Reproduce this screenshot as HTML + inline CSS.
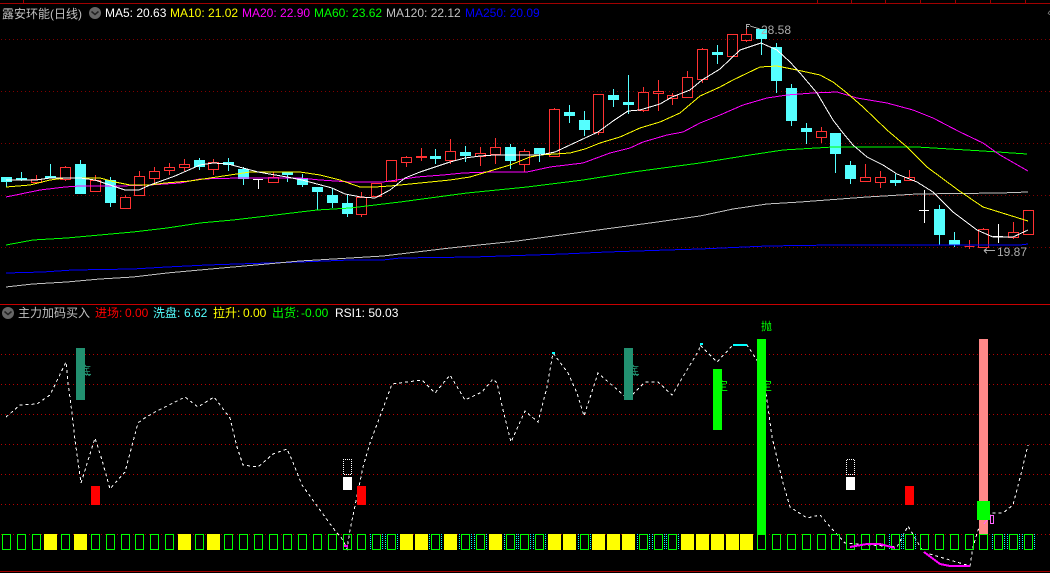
<!DOCTYPE html>
<html><head><meta charset="utf-8"><style>
html,body{margin:0;padding:0;background:#000;width:1050px;height:573px;overflow:hidden}
svg{display:block}
text{font-family:"Liberation Sans","Noto Sans CJK SC",sans-serif;font-size:12px}
.c{font-family:"Liberation Sans","WenQuanYi Zen Hei","Noto Sans CJK SC",sans-serif}
polyline,path,rect,line{shape-rendering:crispEdges}
</style></head><body>
<svg width="1050" height="573" viewBox="0 0 1050 573" xmlns="http://www.w3.org/2000/svg">
<defs>
<pattern id="g1" patternUnits="userSpaceOnUse" x="1" y="0" width="4" height="1"><rect width="1" height="1" fill="#800000"/></pattern>
<pattern id="g2" patternUnits="userSpaceOnUse" x="1" y="0" width="4" height="1"><rect width="1" height="1" fill="#b80000"/></pattern>
<pattern id="cy" patternUnits="userSpaceOnUse" x="0" y="0" width="2" height="2"><rect width="2" height="1" fill="#00ffff"/></pattern>
<pattern id="wd" patternUnits="userSpaceOnUse" x="0" y="0" width="2" height="2"><rect width="1" height="1" fill="#fff"/><rect x="1" y="1" width="1" height="1" fill="#fff"/></pattern>
</defs>
<rect width="1050" height="573" fill="#000"/>
<!-- frame -->
<path d="M0 3.5H1050M23.5 0V3M817.5 0V3M851.5 0V3M885.5 0V3M920.5 0V3M955.5 0V3M990.5 0V3M1025.5 0V3" stroke="#a00000" fill="none"/>
<path d="M0 304.5H1050" stroke="#c80000"/>
<path d="M0 571.5H1050" stroke="#a00000"/>
<!-- grid -->
<path fill="url(#g1)" d="M0 39h1050v1H0zM0 91h1050v1H0zM0 143h1050v1H0zM0 195h1050v1H0zM0 247h1050v1H0z"/>
<path fill="url(#g2)" d="M0 354h1050v1H0zM0 384h1050v1H0zM0 414h1050v1H0zM0 444h1050v1H0zM0 474h1050v1H0zM0 504h1050v1H0zM0 534h1050v1H0z"/>
<!-- red candles -->
<path fill="none" stroke="#ff3232" d="
M36.5 175V179M31.5 179.5h10v3h-10zM36.5 183V184
M65.5 166V167M60.5 167.5h10v12h-10zM65.5 180V181
M95.5 175V180M90.5 180.5h10v11h-10z
M125.5 195V197M120.5 197.5h10v11h-10z
M139.5 171V176M134.5 176.5h10v19h-10z
M154.5 167V171M149.5 171.5h10v7h-10zM154.5 179V183
M169.5 163V167M164.5 167.5h10v3h-10zM169.5 171V175
M184.5 159V164M179.5 164.5h10v3h-10zM184.5 168V171
M213.5 159V162M208.5 162.5h10v7h-10zM213.5 170V175
M273.5 172V177M268.5 177.5h10v5h-10z
M361.5 192V197M356.5 197.5h10v17h-10zM361.5 215V217
M371.5 183.5h10v13h-10z
M386.5 160.5h10v21h-10z
M406.5 156V157M401.5 157.5h10v5h-10zM406.5 163V167
M421.5 148V156M416.5 156.5h10v1h-10zM421.5 158V161
M450.5 139V151M445.5 151.5h10v9h-10zM450.5 161V164
M480.5 147V153M475.5 153.5h10v3h-10zM480.5 157V166
M495.5 138V147M490.5 147.5h10v7h-10zM495.5 155V164
M524.5 149V151M519.5 151.5h10v13h-10zM524.5 165V172
M554.5 108V109M549.5 109.5h10v47h-10z
M593.5 94.5h10v38h-10zM598.5 133V135
M643.5 87V92M638.5 92.5h10v18h-10zM643.5 111V112
M658.5 80V91M653.5 91.5h10v2h-10zM658.5 94V111
M672.5 93V95M667.5 95.5h10v3h-10zM672.5 99V105
M687.5 71V77M682.5 77.5h10v20h-10z
M702.5 48V49M697.5 49.5h10v30h-10zM702.5 80V83
M727.5 34.5h10v22h-10z
M746.5 27V34M741.5 34.5h10v6h-10zM746.5 41V42
M821.5 127V131M816.5 131.5h10v6h-10zM821.5 138V143
M865.5 164V177M860.5 177.5h10v4h-10z
M880.5 171V177M875.5 177.5h10v5h-10zM880.5 183V188
M909.5 170V177M904.5 177.5h10v3h-10z
M964.5 246.5h10M969.5 240V249
M983.5 228V229M978.5 229.5h10v18h-10z
M1013.5 222V232M1008.5 232.5h10v5h-10zM1013.5 238V239
M1023.5 210.5h10v24h-10z"/>
<!-- cyan wicks -->
<path fill="none" stroke="#55ffff" d="M6.5 177V187M21.5 172V181M50.5 164V178M80.5 160V194M110.5 177V207M199.5 158V170M228.5 158V171M243.5 167V185M287.5 172V182M302.5 174V187M317.5 187V210M332.5 188V208M347.5 195V217M435.5 149V164M465.5 146V162M510.5 144V169M539.5 148V162M569.5 105V123M584.5 111V136M613.5 89V107M628.5 75V114M717.5 45V64M761.5 29V55M776.5 43V93M791.5 84V126M806.5 123V144M835.5 133V173M850.5 161V184M895.5 174V186M939.5 205V245M954.5 232V247"/>
<!-- cyan bodies -->
<path fill="#55ffff" d="M1 177h11v5H1zM16 178h11v2H16zM45 176h11v2H45zM75 164h11v30H75zM105 180h11v23h-11zM194 160h11v7h-11zM223 162h11v3h-11zM238 169h11v10h-11zM282 172h11v3h-11zM297 178h11v7h-11zM312 187h11v5h-11zM327 195h11v8h-11zM342 203h11v11h-11zM430 156h11v3h-11zM460 152h11v4h-11zM505 147h11v14h-11zM534 148h11v6h-11zM564 112h11v4h-11zM579 120h11v10h-11zM608 95h11v5h-11zM623 102h11v3h-11zM712 52h11v3h-11zM756 29h11v10h-11zM771 47h11v34h-11zM786 88h11v33h-11zM801 128h11v4h-11zM830 133h11v21h-11zM845 165h11v14h-11zM890 180h11v3h-11zM934 209h11v26h-11zM949 240h11v5h-11z"/>
<!-- white dojis -->
<path fill="none" stroke="#fff" d="M253 179.5h10M258.5 179V189M919 210.5h10M924.5 190V223M993 236.5h10M998.5 224V243"/>
<!-- MA lines -->
<polyline fill="none" stroke="#0000ff" points="6,273 43,272 73,270 133,269 167,267 207,265 237,264 300,262 350,260 383,260 400,258 473,257 563,254 607,252 667,250 700,249 767,246 833,245 1020,245 1028,244"/>
<polyline fill="none" stroke="#c0c0c0" points="6,287 33,284 67,282 100,279 133,277 167,273 200,270 233,267 267,264 300,261 350,258 383,256 450,248 517,241 583,232 650,223 700,216 733,209 767,204 800,202 867,197 917,194 1000,193 1028,192"/>
<polyline fill="none" stroke="#00ff00" points="6,245 33,240 67,238 100,235 133,232 167,228 200,223 233,220 267,216 300,212 317,210 350,208 400,202 467,193 527,187 583,180 633,172 700,163 750,155 783,150 833,147 917,147 983,151 1027,154"/>
<polyline fill="none" stroke="#ff00ff" points="6,197 40,190 65,187 80,186 120,186 150,185 180,183 200,179 240,178 300,178 320,180 350,182 383,182 417,177 443,175 463,173 490,172 527,172 550,167 583,163 610,153 630,148 643,142 667,135 683,132 700,123 720,115 743,105 767,98 787,95 813,93 837,92 857,98 887,103 913,110 933,118 960,132 983,143 1000,155 1028,171"/>
<polyline fill="none" stroke="#ffff00" points="6,187 30,185 50,180 65,178 100,178 115,182 130,185 150,185 165,183 190,181 210,178 230,175 250,172 270,172 300,172 320,175 340,180 360,187 375,187 390,186 420,183 450,180 470,177 490,171 510,165 530,157 540,155 570,153 585,149 600,143 620,137 640,128 660,122 680,113 700,96 720,87 733,80 760,67 777,66 797,70 820,75 833,82 847,93 863,107 887,130 907,147 927,167 958,190 983,207 1028,221"/>
<polyline fill="none" stroke="#ffffff" points="6,180 36,180 50,178 80,178 95,180 110,185 125,190 139,190 150,185 175,176 200,165 213,163 228,164 243,168 258,172 287,177 302,180 317,184 332,188 345,194 361,197 375,198 390,190 405,178 420,172 435,167 450,162 465,158 480,156 495,155 540,155 555,152 570,145 585,138 598,132 613,121 628,111 640,110 660,104 672,97 690,90 702,80 720,69 740,50 761,43 777,50 790,62 800,73 817,93 833,120 843,133 853,145 867,157 883,165 897,174 917,182 933,192 953,212 977,230 993,237 1013,237 1028,230"/>
<!-- labels on chart -->
<text x="761" y="34" fill="#aaaaaa">28.58</text>
<path fill="none" stroke="#aaa" d="M746.5 24V29M746 24.5h4M746 26.5h3M750 26l10 3"/>
<text x="997" y="256" fill="#aaaaaa">19.87</text>
<path fill="none" stroke="#aaa" d="M984 250.5h11M984 250.5l3-2M984 250.5l3 3"/>
<!-- header -->
<text class="c" x="2" y="18" fill="#c0c0c0">露安环能(日线)</text>
<circle cx="95" cy="13" r="6" fill="#666"/>
<path d="M91.5 11.5l3.5 3 3.5-3" fill="none" stroke="#222" stroke-width="1.5" style="shape-rendering:auto"/>
<text x="105" y="17" fill="#fff">MA5: 20.63</text>
<text x="170" y="17" fill="#ffff00">MA10: 21.02</text>
<text x="242" y="17" fill="#ff00ff">MA20: 22.90</text>
<text x="314" y="17" fill="#00ff00">MA60: 23.62</text>
<text x="386" y="17" fill="#c0c0c0">MA120: 22.12</text>
<text x="465" y="17" fill="#0000ff">MA250: 20.09</text>
<path d="M1048 13l2-2M1048 13l2 2" stroke="#666" fill="none"/>
<!-- sub header -->
<circle cx="8" cy="313" r="6" fill="#666"/>
<path d="M4.5 311.5l3.5 3 3.5-3" fill="none" stroke="#222" stroke-width="1.5" style="shape-rendering:auto"/>
<text class="c" x="18" y="317" fill="#c0c0c0">主力加码买入</text>
<text class="c" x="95" y="317" fill="#ff0000">进场:</text><text x="125" y="317" fill="#ff0000">0.00</text>
<text class="c" x="153" y="317" fill="#55ffff">洗盘:</text><text x="184" y="317" fill="#55ffff">6.62</text>
<text class="c" x="213" y="317" fill="#ffff00">拉升:</text><text x="243" y="317" fill="#ffff00">0.00</text>
<text class="c" x="272" y="317" fill="#00ff00">出货:</text><text x="301" y="317" fill="#00ff00">-0.00</text>
<text x="335" y="317" fill="#fff">RSI1: 50.03</text>
<!-- tiny labels behind bars -->
<text class="c" x="79" y="375" fill="#229070">底</text>
<text class="c" x="627" y="375" fill="#229070">底</text>
<text class="c" x="716" y="390" fill="#00ff00">定</text>
<text class="c" x="760" y="390" fill="#00ff00">定</text>
<text class="c" x="761" y="330" fill="#00ff00" style="font-size:11px">抛</text>
<!-- RSI dashed -->
<polyline fill="none" stroke="#fff" stroke-dasharray="3 3" points="6,417 20,405 37,404 50,395 66,362 68,383 72,413 75,440 81,483 95,438 102,460 110,489 125,472 138,423 143,419 155,412 185,397 198,407 214,397 230,418 237,447 243,465 258,467 273,454 287,449 292,460 302,485 333,528 343,540 347,549 350,530 363,467 370,443 385,403 392,384 422,380 435,393 450,375 465,400 482,392 493,379 497,383 503,410 511,442 525,411 538,422 547,387 553,353 568,373 577,393 584,416 598,373 628,399 645,382 658,382 672,395 699,350 700,345 717,362 733,345 747,345 762,368 767,400 772,437 783,483 790,507 807,518 820,515 833,530 845,543 897,547 908,526 918,543 923,552 970,566 973,547 978,530 992,513 1003,513 1013,505 1022,470 1028,445"/>
<!-- bottom boxes yellow -->
<path fill="#ffff00" d="M44 534h13v16H44zM74 534h13v16H74zM178 534h13v16h-13zM207 534h13v16h-13zM400 534h13v16h-13zM415 534h13v16h-13zM444 534h13v16h-13zM489 534h13v16h-13zM548 534h13v16h-13zM563 534h13v16h-13zM592 534h13v16h-13zM607 534h13v16h-13zM622 534h13v16h-13zM681 534h13v16h-13zM696 534h13v16h-13zM711 534h13v16h-13zM726 534h13v16h-13zM740 534h13v16h-13z"/>
<!-- cyan dotted sides -->
<path fill="url(#cy)" d="M370 534h1v16h-1zM382 534h1v16h-1zM385 534h1v16h-1zM397 534h1v16h-1zM429 534h1v16h-1zM441 534h1v16h-1zM459 534h1v16h-1zM471 534h1v16h-1zM474 534h1v16h-1zM486 534h1v16h-1zM504 534h1v16h-1zM516 534h1v16h-1zM518 534h1v16h-1zM530 534h1v16h-1zM533 534h1v16h-1zM545 534h1v16h-1zM578 534h1v16h-1zM590 534h1v16h-1zM637 534h1v16h-1zM649 534h1v16h-1zM652 534h1v16h-1zM664 534h1v16h-1zM666 534h1v16h-1zM678 534h1v16h-1zM889 534h1v16h-1zM901 534h1v16h-1zM903 534h1v16h-1zM915 534h1v16h-1zM992 534h1v16h-1zM1004 534h1v16h-1zM1007 534h1v16h-1zM1019 534h1v16h-1zM1022 534h1v16h-1zM1034 534h1v16h-1z"/>
<!-- hollow boxes -->
<path fill="none" stroke="#00ff00" d="M2.5 534.5h8v15h-8zM17.5 534.5h8v15h-8zM32.5 534.5h8v15h-8zM61.5 534.5h8v15h-8zM91.5 534.5h8v15h-8zM106.5 534.5h8v15h-8zM121.5 534.5h8v15h-8zM135.5 534.5h8v15h-8zM150.5 534.5h8v15h-8zM165.5 534.5h8v15h-8zM195.5 534.5h8v15h-8zM224.5 534.5h8v15h-8zM239.5 534.5h8v15h-8zM254.5 534.5h8v15h-8zM269.5 534.5h8v15h-8zM283.5 534.5h8v15h-8zM298.5 534.5h8v15h-8zM313.5 534.5h8v15h-8zM328.5 534.5h8v15h-8zM343.5 534.5h8v15h-8zM357.5 534.5h8v15h-8zM372.5 534.5h8v15h-8zM387.5 534.5h8v15h-8zM431.5 534.5h8v15h-8zM461.5 534.5h8v15h-8zM476.5 534.5h8v15h-8zM506.5 534.5h8v15h-8zM520.5 534.5h8v15h-8zM535.5 534.5h8v15h-8zM580.5 534.5h8v15h-8zM639.5 534.5h8v15h-8zM654.5 534.5h8v15h-8zM668.5 534.5h8v15h-8zM757.5 534.5h8v15h-8zM772.5 534.5h8v15h-8zM787.5 534.5h8v15h-8zM802.5 534.5h8v15h-8zM817.5 534.5h8v15h-8zM831.5 534.5h8v15h-8zM846.5 534.5h8v15h-8zM861.5 534.5h8v15h-8zM876.5 534.5h8v15h-8zM891.5 534.5h8v15h-8zM905.5 534.5h8v15h-8zM920.5 534.5h8v15h-8zM935.5 534.5h8v15h-8zM950.5 534.5h8v15h-8zM965.5 534.5h8v15h-8zM979.5 534.5h8v15h-8zM994.5 534.5h8v15h-8zM1009.5 534.5h8v15h-8zM1024.5 534.5h8v15h-8z"/>
<!-- bars -->
<rect x="76" y="348" width="9" height="52" fill="#229070"/>
<path d="M85 374.5h6" stroke="#229070"/>
<rect x="624" y="348" width="9" height="52" fill="#229070"/>
<path d="M633 374.5h6" stroke="#229070"/>
<rect x="713" y="369" width="9" height="61" fill="#00ff00"/>
<rect x="757" y="339" width="9" height="196" fill="#00ff00"/>
<rect x="979" y="339" width="9" height="195" fill="#ff8888"/>
<rect x="977" y="501" width="13" height="19" fill="#00ff00"/>
<path d="M990.5 515.5h3v8h-3z" fill="none" stroke="#ff66ff"/>
<path d="M984 524l3-4" stroke="#ff66ff" fill="none"/>
<rect x="91" y="486" width="9" height="19" fill="#ff0000"/>
<rect x="357" y="486" width="9" height="19" fill="#ff0000"/>
<rect x="905" y="486" width="9" height="19" fill="#ff0000"/>
<rect x="343" y="477" width="9" height="13" fill="#fff"/>
<rect x="846" y="477" width="9" height="13" fill="#fff"/>
<path fill="url(#wd)" d="M343 459h9v1h-9zM343 474h9v1h-9zM343 460h1v14h-1zM351 460h1v14h-1zM846 459h9v1h-9zM846 474h9v1h-9zM846 460h1v14h-1zM854 460h1v14h-1z"/>
<!-- magenta & cyan overlays -->
<polyline fill="none" stroke="#ff00ff" stroke-width="2" points="850,547 867,544 880,544 895,548"/>
<polyline fill="none" stroke="#ff00ff" stroke-width="2" points="924,552 940,564 950,566 970,566"/>
<path d="M344 546h4" stroke="#ff00ff" stroke-width="2"/>
<path d="M552 353h3M700 344h3M733 345h14" stroke="#00ffff" stroke-width="2"/>
</svg>
</body></html>
